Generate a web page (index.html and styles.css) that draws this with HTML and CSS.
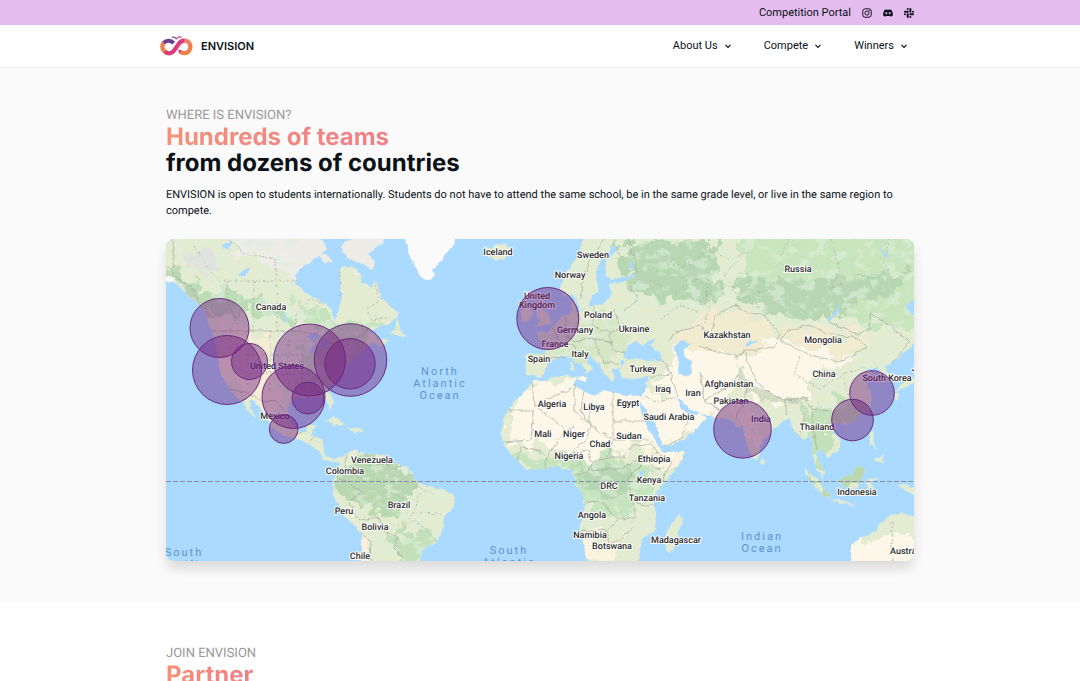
FILE: index.html
```html
<!DOCTYPE html>
<html lang="en">
<head>
<meta charset="utf-8">
<meta name="viewport" content="width=device-width, initial-scale=1">
<title>ENVISION</title>
<link rel="stylesheet" href="styles.css">
</head>
<body>
<div class="topbar">
  <div class="topbar-inner">
    <a class="portal" href="#portal">Competition Portal</a>
    <a class="social" href="#instagram" aria-label="Instagram"><svg viewBox="0 0 20 20" fill="none" stroke="#161320" stroke-width="2"><rect x="1.5" y="1.5" width="17" height="17" rx="5"/><circle cx="10" cy="10" r="4.2"/><circle cx="14.9" cy="5.1" r=".6"/></svg></a>
    <a class="social" href="#discord" aria-label="Discord"><svg viewBox="0 0 20 20" fill="#161320"><path fill-rule="evenodd" d="M7.4 2.6 6.9 3.9C8.900 3.500 11.100 3.500 13.100 3.900L12.600 2.600C14 2.800 15.400 3.200 16.700 3.800 19 7.200 20.100 10.900 19.700 15 18.200 16.100 16.600 16.900 15 17.400L13.900 15.600 15.300 14.900C12 16.400 8 16.400 4.700 14.900L6.100 15.600 5 17.400C3.400 16.900 1.800 16.100.3 15-.1 10.900 1 7.200 3.300 3.800 4.600 3.200 6 2.800 7.400 2.600ZM6.700 8.200A1.900 2.100 0 1 0 6.700 12.400 1.900 2.100 0 1 0 6.700 8.200ZM13.300 8.200A1.900 2.100 0 1 0 13.300 12.400 1.900 2.100 0 1 0 13.300 8.200Z"/></svg></a>
    <a class="social" href="#slack" aria-label="Slack"><svg viewBox="0 0 20 20" fill="#161320"><rect x="5.500" y="0" width="4" height="3.900" rx="2"/><rect x="0" y="5.300" width="9.500" height="4" rx="2"/><rect x="10.700" y="0" width="4" height="9.300" rx="2"/><rect x="16" y="5.300" width="4" height="4" rx="2"/><rect x="10.700" y="10.600" width="9.300" height="4" rx="2"/><rect x="10.700" y="16" width="4" height="4" rx="2"/><rect x="5.500" y="10.600" width="4" height="9.400" rx="2"/><rect x="0" y="10.600" width="4" height="4" rx="2"/></svg></a>
  </div>
</div>
<header class="header">
  <div class="header-inner">
    <a class="brand" href="#home">
      <svg class="logo" viewBox="0 0 33 20" fill="none" stroke-width="4.200">
        <path d="M5.500 16.300A6.500 6.500 0 0 1 4 6.500" stroke="#ee8148"/>
        <path d="M3.800 6.900C6.500 3.900 10.800 4.100 13.600 7.200" stroke="#6b3d8c"/>
        <path d="M29.600 7.800C31.600 11.800 29.300 17 24.300 17.200 22.500 17.200 21.200 16.500 20 15.500" stroke="#ee8148"/>
        <path d="M24 4.700C26.500 4.500 28.800 5.800 29.900 8.400" stroke="#f0806c"/>
        <path d="M4.800 15.700C8 18.500 12 17.500 14.300 14.200L18.500 8.200C19.900 6 21.800 4.800 24.300 4.700" stroke="#dc3b78"/>
        <path d="M18.200 13.500 21.800 14.200 19.300 17.800Z" fill="#dc3b78"/>
        <path d="M12 1.600C13.700.6 15.300 1 16.400 3.200" stroke="#6b3d8c" stroke-width="1.200"/>
        <path d="M16.400 3.200C17.300 1 19.200.5 21.500 1.400" stroke="#dc3b78" stroke-width="1.200"/>
      </svg>
      <span>ENVISION</span>
    </a>
    <nav class="nav" aria-label="Main">
      <button type="button">About Us <svg viewBox="0 0 8 8"><path d="M1.500 2.800 4 5.300 6.500 2.800"/></svg></button>
      <button type="button">Compete <svg viewBox="0 0 8 8"><path d="M1.500 2.800 4 5.300 6.500 2.800"/></svg></button>
      <button type="button">Winners <svg viewBox="0 0 8 8"><path d="M1.500 2.800 4 5.300 6.500 2.800"/></svg></button>
    </nav>
  </div>
</header>
<main>
<section class="section section-where">
  <div class="container">
    <p class="eyebrow">WHERE IS ENVISION?</p>
    <h2 class="title"><span class="gradient">Hundreds of teams</span><br>from dozens of countries</h2>
    <p class="lead">ENVISION is open to students internationally. Students do not have to attend the same school, be in the same grade level, or live in the same region to compete.</p>
    <svg class="map" viewBox="166 239 748 322" role="img" aria-label="World map of participating teams">
      <defs>
        <filter id="rough" filterUnits="userSpaceOnUse" x="150" y="225" width="780" height="350">
          <feTurbulence type="fractalNoise" baseFrequency=".14" numOctaves="3" seed="4"/>
          <feDisplacementMap in="SourceGraphic" scale="5" xChannelSelector="R" yChannelSelector="G"/>
        </filter>
        <filter id="rougher" filterUnits="userSpaceOnUse" x="150" y="225" width="780" height="350">
          <feTurbulence type="fractalNoise" baseFrequency=".06" numOctaves="4" seed="9"/>
          <feDisplacementMap in="SourceGraphic" scale="34" xChannelSelector="R" yChannelSelector="G"/>
        </filter>
        <filter id="speckle" filterUnits="userSpaceOnUse" x="150" y="225" width="780" height="350">
          <feTurbulence type="fractalNoise" baseFrequency=".07 .1" numOctaves="4" seed="21"/>
          <feColorMatrix values="0 0 0 0 .72  0 0 0 0 .86  0 0 0 0 .7  8 0 0 0 -4.200"/>
          <feComposite in2="SourceGraphic" operator="in"/>
        </filter>
        <path id="americas" d="M160 230H314L322 242 327 249 310 262 300 268 296 276 296 284 304 292 316 299 326 303 331 311 335 321 338 312 339 305 342 298 340 285 340 268 348 266 356 270 362 275 363 282 372 288 375 279 379 290 382 298 388 305 398 312 396 319 385 325 376 328 366 334 378 333 375 338 388 341 380 348 374 343 364 348 360 354 352 362 345 368 340 375 330 385 328 391 333 401 332 411 328 405 325 397 318 395 310 398 298 397 290 402 288 411 291 423 299 431 306 431 308 424 315 424 312 436 322 440 325 448 326 456 333 459 342 457 347 453 356 449 358 453 366 453 385 455 393 463 405 466 412 472 414 480 427 486 443 489 455 497 452 509 444 517 442 533 436 543 422 550 418 570H359L361 550 361 532 355 526 345 517 338 505 332 493 333 482 336 472 340 463 331 461 323 458 320 452 309 444 297 439 280 434 270 427 267 419 258 405 250 399 248 402 256 417 250 413 242 401 235 395 226 384 220 372 217 357 215 340 207 320 203 308 190 297 178 285 172 281H160Z"/>
        <path id="oldworld" d="M588 230 580 250 574 262 563 274 561 288 565 298 573 293 577 299 580 310 588 309 592 296 599 290 595 278 600 262 608 252 613 245 618 248 606 262 605 275 612 280 626 276 637 276 623 283 610 284 612 295 604 302 590 307 580 312 574 310 578 300 571 302 572 311 563 317 552 327 546 333 536 333 540 338 546 345 545 353 525 353 526 374 532 375 540 377 547 370 549 362 559 357 568 355 576 362 585 367 587 375 592 369 588 364 580 357 578 352 586 351 594 360 601 366 606 376 612 382 616 376 612 370 621 366 621 360 626 363 619 368 622 378 635 379 648 377 645 392 640 397 625 396 610 392 603 390 594 397 582 390 573 385 577 376 560 376 545 380 533 380 525 392 513 402 508 411 504 418 502 430 502 440 508 450 518 462 528 470 545 468 558 465 565 470 573 470 575 484 581 493 585 505 583 515 580 530 584 545 588 570H634L641 549 641 540 655 530 656 515 653 497 660 487 672 474 682 462 684 451 664 453 658 446 650 432 643 418 638 405 641 401 650 415 657 428 664 447 675 443 690 435 700 425 706 419 700 412 690 416 684 412 677 400 679 397 689 409 700 412 717 420 728 419 737 426 743 425 745 440 750 453 757 460 761 445 770 433 780 425 788 418 792 427 798 436 803 440 810 435 812 450 815 466 823 478 824 470 817 455 821 448 828 458 838 452 840 440 832 430 836 422 846 425 858 418 870 408 872 395 866 382 873 374 866 368 878 368 881 378 886 382 888 372 885 368 898 358 911 347 920 335V230Z"/>
        <path id="islands" d="M341 247 350 239 353 232H386L382 243 369 254 375 262 372 269 360 262 350 260ZM319 253 328 256 334 262 323 263ZM391 334 398 318 400 329 408 338ZM325 421 334 417 346 425 334 424ZM348 428 360 428 364 432 354 433ZM485 245 490 248 496 244 506 243 513 250 508 256 497 261 488 257ZM521 311 529 308 532 314 529 321 521 321ZM537 302 544 301 543 309 550 317 551 323 536 327 541 321 536 312ZM577 378 587 377 584 383ZM570 362 574 363 573 370 570 369ZM762 457 766 462 763 465 760 461ZM680 514 682 521 675 545 670 553 665 550 666 534 672 524ZM802 467 813 474 822 485 831 497 824 496 812 483ZM831 499 845 501 855 505 842 504ZM839 479 850 475 859 465 865 470 862 480 858 488 846 487 840 484ZM866 485 868 479 880 478 870 482 875 489 868 491ZM870 433 874 432 873 443 878 450 870 445ZM875 460 883 455 884 464ZM897 485 905 484 920 490V498L906 491ZM851 570V545L860 538 875 532 880 524 892 515 900 513 914 516 920 514V570ZM894 391 903 383 918 376V381L903 389ZM894 392 899 392 898 402 895 399Z"/>
        <clipPath id="land"><use href="#americas"/><use href="#oldworld"/><use href="#islands"/></clipPath>
      </defs>
      <rect x="166" y="239" width="748" height="322" fill="#aadaff"/>
      <g filter="url(#rough)">
        <g fill="#e3ecd0"><use href="#americas"/><use href="#oldworld"/><use href="#islands"/></g>
        <g clip-path="url(#land)">
          <g filter="url(#rougher)">
            <path fill="#edece6" d="M225 225H420V268L370 274 335 255 310 285 285 282 265 262 240 253Z"/>
            <path fill="#bcdcb6" d="M165 265 205 285 235 290 275 305 300 318 290 323 250 312 215 320 195 302Z"/>
            <path fill="#c5e3bc" d="M295 300 320 308 335 325 372 325 400 325 350 345 315 330Z"/>
            <path fill="#f4ecd3" d="M222 330 270 332 272 410 240 396 222 365Z"/>
            <path fill="#c7e3bd" d="M300 345 365 340 340 380 310 395 295 385Z"/>
            <path fill="#f4ecd3" d="M240 385 275 388 285 415 266 415Z"/>
            <path fill="#e1e1df" d="M184 252 210 250 222 270 205 280Z"/>
            <path fill="#b9d8b2" d="M345 466 385 459 412 475 420 487 400 505 402 520 388 517 350 505 338 483Z"/>
            <path fill="#f8f0dc" d="M328 485 348 516 372 545 372 575 354 575 358 533Z"/>
            <path fill="#c3e0ba" d="M385 530 440 535 420 570 395 560Z"/>
            <path fill="#b7d7b2" d="M612 248 665 240 720 243 716 302 665 300 630 288Z"/>
            <path fill="#c9e5bd" d="M740 225H920V330L850 320 790 295 745 280Z"/>
            <path fill="#b7d7b2" d="M720 285 760 281 800 275 840 282 905 270 908 288 860 302 810 326 788 315 750 305Z"/>
            <path fill="#f3ebd0" d="M674 335 700 318 735 305 762 320 780 335 760 350 720 355 690 352Z"/>
            <path fill="#fcf7e9" d="M682 346 735 357 780 340 825 346 850 358 835 369 810 382 808 400 765 402 735 385 715 422 683 405 648 375 665 374Z"/>
            <path fill="#f3ebd0" d="M780 335 810 325 868 335 868 352 830 357Z"/>
            <path fill="#fcf7e9" d="M528 383 584 378 652 395 678 400 708 418 665 455 637 441 617 453 580 455 545 450 500 439Z"/>
            <path fill="#c2e0b9" d="M805 410 860 397 878 413 835 428 830 470 815 470Z"/>
            <path fill="#c6e4bd" d="M500 447 545 459 600 455 635 455 652 470 646 510 600 518 575 495 570 466 535 476Z"/>
            <path fill="#b5d6b0" d="M575 467 600 469 627 470 631 490 610 495 580 490Z"/>
            <path fill="#fcf3df" d="M644 450 690 444 680 468 660 482Z"/>
            <path fill="#fcf3df" d="M578 530 596 532 621 540 613 568 585 570Z"/>
            <path fill="#f4edd5" d="M728 407 753 408 758 448 742 424Z"/>
            <path fill="#b9d8b2" d="M838 470 864 465 861 489 842 488ZM804 470 834 496 820 495Z"/>
            <path fill="#fcf7e9" d="M850 540 920 533V575H845Z"/>
            <path fill="#d5e7c5" d="M515 350 607 308 635 350 605 360 560 360Z"/>
          </g>
          <g filter="url(#speckle)" opacity=".6"><path d="M166 239H300L320 315 390 325 340 398 290 380 225 320ZM560 230H914V360L870 400 820 425 810 385 860 345 770 325 720 300 650 320 555 360ZM335 460H450V561H380ZM566 465H655V530H590Z"/></g>
          <path fill="#b8c9ad" opacity=".6" d="M735 360 752 385 780 397 810 398 802 403 766 402 742 388ZM175 270 200 300 215 318 208 320 185 292Z" filter="url(#rough)"/>
        </g>
        <g fill="#aadaff">
          <path d="M622 357 629 344 637 341 642 346 650 340 655 338 650 346 661 354 662 360 648 361 637 358 627 361Z"/>
          <path d="M674 347 682 340 692 343 684 349 684 356 691 361 692 374 684 377 678 373 679 361Z"/>
          <path d="M744 343 758 340 757 342 746 346ZM827 320 835 312 840 303 839 312 829 322ZM640 471 645 472 642 477 639 475ZM222 246 232 241 229 249 224 250ZM237 274 250 268 246 276 240 276ZM282 310 288 320 289 326 283 318ZM305 337 314 333 321 338 315 340 316 353 311 353 313 341ZM320 342 329 340 325 350ZM906 305 914 300V316L908 312ZM629 261 634 265 636 271 630 267ZM878 245 890 258 885 256Z"/>
        </g>
        <g fill="#fafafa"><path d="M402 230 411 258 420 275 427 280 432 281 434 270 443 258 452 246 461 230ZM160 276 171 276 173 281H160Z"/></g>
        <g fill="none" stroke="#a5a79d" stroke-width=".800" opacity=".85">
          <path d="M173 235V277L190 285 199 302M211 331H303L316 334 330 343 347 340 360 337 368 331M230 389 250 394 264 402 275 400 286 413M294 437 298 432 305 431M309 443 315 437M347 454 344 467 354 474 363 480M366 453 370 467 385 463M385 455 389 469 402 466M338 479 350 483 362 493 350 502 353 514 360 520M360 520 378 517 382 529 397 537 393 548 403 558M361 532 371 543 370 561"/>
          <path d="M604 239 590 260 583 280 580 298M629 239 635 260 638 275M548 357 566 358M552 328 561 342 573 345 578 353M566 316 564 333 574 342 592 338 599 350M594 306 593 327 610 333 620 328 614 309M630 284 638 300 625 310M610 333 613 350 625 353M599 350 603 363 619 363M593 340 613 342M668 342 675 332 700 326 712 333 715 316 735 305 748 313 763 315 780 334 774 347 757 350 744 350 740 357 710 350 699 346M780 340 788 331 810 325 831 334 858 338 867 347 840 362 806 354 780 340M830 322 858 335 870 329 870 313 890 325 909 342 893 363M744 350 748 363 755 379 766 391 785 400 806 398 812 409 829 411M670 374 678 396M700 372 704 401 720 410M704 401 724 389 739 375M662 358 671 374 650 377M736 418 744 403 748 385M785 400 787 415M800 437 805 414M812 409 813 430 818 450"/>
          <path d="M532 381 534 405 573 388M508 411H534L531 440 504 442M534 405 566 430 575 427M575 384V411L590 425V405M584 391 581 410 590 425M613 393V421H648M613 421V440L607 457M614 440H650M566 430 552 450M590 425 587 440 569 455M590 425 613 440M545 468 550 450 572 453 588 450 592 462 612 457 624 457 633 446 651 445 664 458 672 462 660 484M517 462 521 448 541 450M575 475 589 471 594 460M589 471 624 468 633 461 646 461M585 502 605 503 609 512 619 519 636 518 628 478 641 465M581 531 607 530 619 520M607 530 610 544 622 539 635 525M631 500 644 505 655 505M641 452 655 468 665 467M644 396 659 402 676 397M664 447 681 438 688 421"/>
        </g>
        <g fill="none" stroke="#a9aaa5" stroke-width=".700" stroke-dasharray="2 2">
          <path d="M194 245 207 267 219 281H297M228 239 246 254 276 259V281M227 281V301L240 331M253 281V331M276 281 278 331M294 332 296 315 310 299 327 304M340 267V298M375 281 380 302 367 308 370 320 390 318M230 331V360L245 374M248 331V385M270 331V392M288 340V390M302 345V382M245 355H302M250 374H310M320 350 340 368M391 493 405 500 416 485 434 495M398 526 414 513 420 493M420 513 441 514M393 537 415 520 431 535"/>
          <path d="M660 250 678 270 710 250 730 260M650 280 675 292 700 278 711 292 705 325M673 265 690 265M710 239 706 300M745 250 725 275 740 300 765 290 783 305M788 239 780 260 796 285M831 239 840 270 831 289 858 275 880 278M890 239 883 262 892 280 914 270M661 320 680 305 698 312M800 356 794 374 820 389 843 374 867 367M843 374 849 398 832 415M892 522V561"/>
        </g>
      </g>
      <path d="M166 481.500H914" stroke="#8b8ba3" stroke-width="1.200" stroke-dasharray="5 2"/>
      <g class="ocean">
        <text x="440" y="375">North</text><text x="440" y="387">Atlantic</text><text x="440" y="399">Ocean</text>
        <text x="184" y="556">South</text><text x="184" y="568">Pacific</text>
        <text x="509" y="554">South</text><text x="509" y="566">Atlantic</text>
        <text x="762" y="540">Indian</text><text x="762" y="552">Ocean</text>
      </g>
      <g class="country">
        <text x="271" y="310">Canada</text><text x="277" y="369">United States</text><text x="275" y="419">Mexico</text>
        <text x="372" y="463">Venezuela</text><text x="345" y="474">Colombia</text><text x="399" y="508">Brazil</text><text x="344" y="514">Peru</text><text x="375" y="530">Bolivia</text><text x="360" y="559">Chile</text>
        <text x="498" y="255">Iceland</text><text x="593" y="258">Sweden</text><text x="570" y="278">Norway</text><text x="537" y="299">United</text><text x="537" y="308">Kingdom</text><text x="598" y="318">Poland</text><text x="575" y="333">Germany</text><text x="634" y="332">Ukraine</text><text x="555" y="347">France</text><text x="539" y="362">Spain</text><text x="580" y="357">Italy</text><text x="643" y="372">Turkey</text>
        <text x="798" y="272">Russia</text><text x="727" y="338">Kazakhstan</text><text x="823" y="343">Mongolia</text><text x="824" y="377">China</text><text x="729" y="387">Afghanistan</text><text x="693" y="396">Iran</text><text x="663" y="392">Iraq</text><text x="731" y="404">Pakistan</text><text x="887" y="381">South Korea</text><text x="924" y="371">Japan</text><text x="669" y="420">Saudi Arabia</text><text x="761" y="422">India</text><text x="817" y="430">Thailand</text><text x="857" y="495">Indonesia</text><text x="908" y="554">Australia</text>
        <text x="552" y="407">Algeria</text><text x="594" y="410">Libya</text><text x="628" y="406">Egypt</text><text x="543" y="437">Mali</text><text x="574" y="437">Niger</text><text x="600" y="447">Chad</text><text x="629" y="439">Sudan</text><text x="569" y="459">Nigeria</text><text x="654" y="462">Ethiopia</text><text x="649" y="483">Kenya</text><text x="609" y="489">DRC</text><text x="647" y="501">Tanzania</text><text x="592" y="518">Angola</text><text x="590" y="538">Namibia</text><text x="612" y="549">Botswana</text><text x="676" y="543">Madagascar</text>
      </g>
      <g class="teams">
        <circle cx="219.500" cy="328" r="29.500"/><circle cx="227" cy="370" r="34.500"/><circle cx="249.500" cy="361.500" r="18"/><circle cx="309.500" cy="360" r="36"/><circle cx="350.500" cy="360" r="36.300"/><circle cx="350" cy="363.800" r="25.200"/><circle cx="293.500" cy="397" r="31.500"/><circle cx="308" cy="398" r="16"/><circle cx="283.700" cy="429" r="14.400"/><circle cx="547.800" cy="318.500" r="31"/><circle cx="742.500" cy="429.300" r="28.800"/><circle cx="872" cy="393" r="22.300"/><circle cx="852.500" cy="420" r="20.800"/>
      </g>
    </svg>
  </div>
</section>
<section class="section">
  <div class="container">
    <p class="eyebrow">JOIN ENVISION</p>
    <h2 class="title"><span class="gradient">Partner</span></h2>
  </div>
</section>
</main>
</body>
</html>
```
FILE: styles.css
```css
* { box-sizing: border-box; }
html { overflow-x: hidden; scrollbar-width: none; }
body {
  margin: 0;
  background: #fff;
  color: #0b1217;
  font-family: Roboto, "Liberation Sans", sans-serif;
  font-size: 11px;
  line-height: 16px;
  text-rendering: geometricPrecision;
}
a { color: inherit; text-decoration: none; }
p, h2 { margin: 0; }
.topbar { background: #e5bcee; }
.topbar-inner {
  display: flex;
  align-items: center;
  justify-content: flex-end;
  gap: 11px;
  max-width: 748px;
  height: 25px;
  margin: 0 auto;
}
.social { display: flex; }
.social svg { width: 10px; height: 10px; }
.header { border-bottom: 1px solid #ececec; }
.header-inner {
  display: flex;
  align-items: center;
  justify-content: space-between;
  max-width: 760px;
  height: 42px;
  margin: 0 auto;
}
.brand { display: flex; align-items: center; gap: 8px; font-family: Inter, sans-serif; font-weight: 600; }
.logo { width: 33px; height: 20px; }
.nav { display: flex; gap: 32px; padding-right: 12px; }
.nav button {
  display: flex;
  align-items: center;
  gap: 6px;
  padding: 0;
  border: 0;
  background: none;
  color: inherit;
  font: inherit;
}
.nav svg {
  width: 8px;
  height: 8px;
  fill: none;
  stroke: #0b1217;
  stroke-width: 1.2;
}
.section { padding: 42px 16px; }
.section-where { padding-top: 39px; background: #fafafa; }
.container { max-width: 748px; margin: 0 auto; }
.eyebrow { color: #999; font-size: 13px; line-height: 17px; }
.title { font-family: Inter, sans-serif; font-size: 24px; line-height: 26px; font-weight: 700; }
.gradient {
  background: linear-gradient(90deg, #f49178, #f07f88);
  background-clip: text;
  -webkit-background-clip: text;
  color: transparent;
}
.lead { margin: 11px 0 20px; }
.map {
  display: block;
  width: 100%;
  border-radius: 8px;
  box-shadow: 0 8px 12px rgba(0, 0, 0, .12);
}
.country text {
  fill: #2c2c2c;
  stroke: #fff;
  stroke-width: 2;
  stroke-linejoin: round;
  paint-order: stroke;
  font: 500 9px Roboto, sans-serif;
  text-anchor: middle;
}
.ocean text {
  fill: #5f92cc;
  font: 11px Roboto, sans-serif;
  letter-spacing: 2px;
  text-anchor: middle;
}
.teams circle {
  fill: #701f80;
  fill-opacity: .45;
  stroke: #6b2a80;
  stroke-width: 1;
}
```
